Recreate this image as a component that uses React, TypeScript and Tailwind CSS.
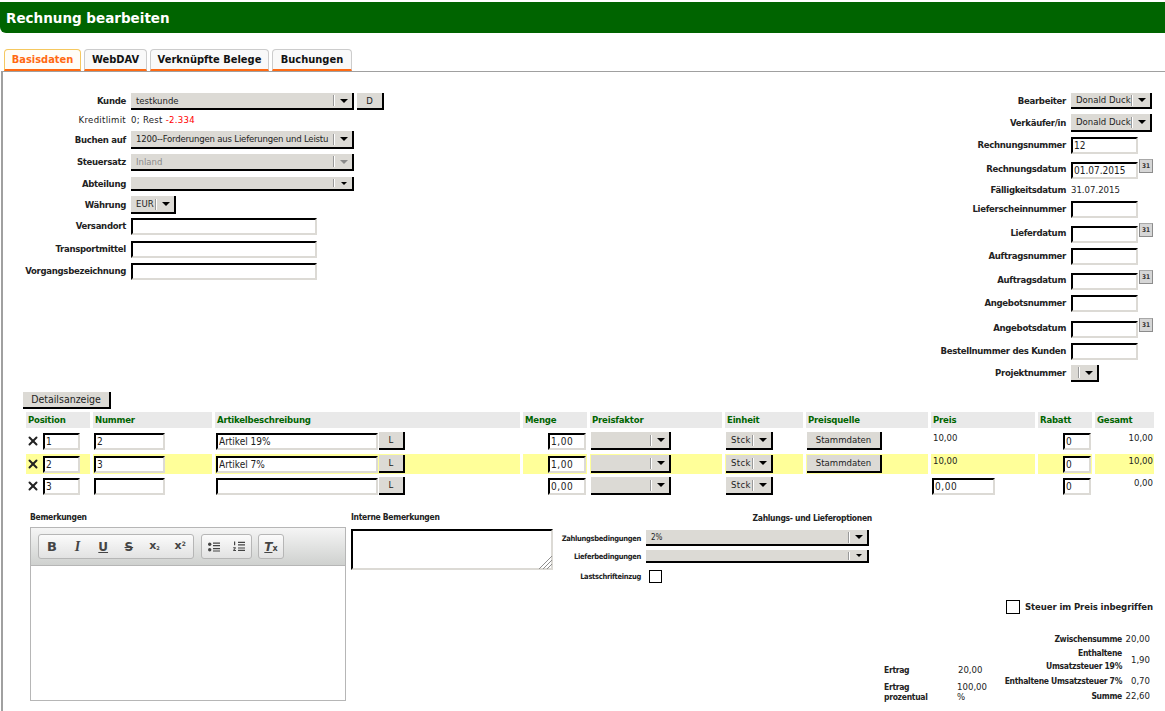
import React from 'react'
import { X } from 'lucide-react'

const condensed = "font-['DejaVu_Sans_Condensed','DejaVu_Sans',sans-serif]"
const labelText = 'text-[9.5px] font-bold tracking-[-0.3px] text-[#222]'
const smallLabel = 'text-[8.5px] font-bold tracking-[-0.3px] text-[#222]'
const tinyLabel = 'text-[7.5px] font-bold tracking-[-0.3px] text-[#222]'

const inputBox =
  'box-border border-2 border-t-black border-l-black border-r-[#dcdad5] border-b-[#dcdad5] bg-white px-px text-[10px] text-[#222] outline-none'

const Arrow = ({ muted, tiny }: { muted?: boolean; tiny?: boolean }) => (
  <svg width={tiny ? 6 : 8} height={tiny ? 3 : 4} viewBox="0 0 8 4" className="block">
    <path d="M0 0h8L4 4z" fill={muted ? '#8a8a8a' : '#000'} />
  </svg>
)

const Select = ({
  className,
  text,
  muted,
  small,
  tiny,
}: {
  className: string
  text?: string
  muted?: boolean
  small?: boolean
  tiny?: boolean
}) => (
  <div
    className={`box-border flex items-center overflow-hidden border-r-2 border-b-2 border-black bg-[#dcdad5] pl-[5px] ${
      small ? 'text-[8px]' : 'text-[9.5px]'
    } ${muted ? 'text-[#8a8a8a]' : 'text-[#222]'} ${className}`}
  >
    <span className="min-w-0 flex-1 whitespace-nowrap pt-px">{text}</span>
    <span className={`${tiny ? 'h-[8px]' : 'h-[11px]'} w-[2px] shrink-0 border-l border-[#999] bg-white`} />
    <span className="flex w-[17px] shrink-0 justify-center">
      <Arrow muted={muted} tiny={tiny} />
    </span>
  </div>
)

const Btn = ({ className, children }: { className: string; children: React.ReactNode }) => (
  <div
    className={`box-border flex items-center justify-center border-r-2 border-b-2 border-black bg-[#dcdad5] pt-px text-[9.5px] text-[#222] ${className}`}
  >
    {children}
  </div>
)

const Field = ({ className, value }: { className: string; value?: string }) => (
  <input readOnly value={value ?? ''} className={`${inputBox} ${className}`} />
)

const CalIcon = () => (
  <div className="ml-px box-border flex h-[14px] w-[14px] shrink-0 items-center justify-center border border-[#8c8c8c] border-t-[#a8a8a8] bg-[#d6d6d6] text-[6.5px] font-bold leading-none text-[#333]">
    31
  </div>
)

const LeftRow = ({
  label,
  className,
  plain,
  children,
}: {
  label: string
  className: string
  plain?: boolean
  children: React.ReactNode
}) => (
  <div className={`flex items-center ${className}`}>
    <span
      className={`w-[125px] shrink-0 whitespace-nowrap pr-[5px] text-right ${
        plain ? 'text-[9.5px] tracking-[0.3px] text-[#222]' : labelText
      }`}
    >
      {label}
    </span>
    {children}
  </div>
)

const RightRow = ({
  label,
  className,
  children,
}: {
  label: string
  className: string
  children: React.ReactNode
}) => (
  <div className={`flex items-center ${className}`}>
    <span className={`w-[170px] shrink-0 whitespace-nowrap pr-[5px] text-right ${labelText}`}>{label}</span>
    {children}
  </div>
)

const DateField = ({ value }: { value?: string }) => (
  <div className="flex items-start">
    <Field className="mt-[3px] h-[17px] w-[67px]" value={value} />
    <CalIcon />
  </div>
)

const columns = [
  'Position',
  'Nummer',
  'Artikelbeschreibung',
  'Menge',
  'Preisfaktor',
  'Einheit',
  'Preisquelle',
  'Preis',
  'Rabatt',
  'Gesamt',
]

const gridCols = 'grid grid-cols-[64px_119px_305px_64px_132px_78px_122px_104px_54px_59px] gap-x-[3px]'

const rows = [
  { pos: '1', num: '2', text: 'Artikel 19%', menge: '1,00', stamm: true, preis: '10,00', gesamt: '10,00', hi: false },
  { pos: '2', num: '3', text: 'Artikel 7%', menge: '1,00', stamm: true, preis: '10,00', gesamt: '10,00', hi: true },
  { pos: '3', num: '', text: '', menge: '0,00', stamm: false, preis: '0,00', gesamt: '0,00', hi: false },
]

const Cell = ({ hi, className, children }: { hi: boolean; className?: string; children?: React.ReactNode }) => (
  <div className={`flex items-center ${hi ? 'bg-[#ffff99]' : ''} ${className ?? ''}`}>{children}</div>
)

const Tab = ({ label, className, active }: { label: string; className: string; active?: boolean }) => (
  <div
    className={`box-border flex h-[22px] items-center justify-center rounded-t-[4px] border border-b-2 pt-[2px] text-[11px] font-bold ${className} ${
      active ? 'border-[#f5c860] border-b-[#ff6a13] bg-[#fffdf8] text-[#ff6a13]' : 'border-[#ccc] border-b-[#ff6a13] bg-[#f9f9f9] text-[#111]'
    }`}
  >
    {label}
  </div>
)

const ToolBtn = ({ children, className }: { children: React.ReactNode; className?: string }) => (
  <span className={`flex h-full flex-1 items-center justify-center font-['DejaVu_Sans',sans-serif] text-[#444] ${className ?? ''}`}>
    {children}
  </span>
)

const toolGroup =
  'flex h-[25px] items-center rounded-[3px] border border-[#b6b6b6] bg-gradient-to-b from-[#fbfbfb] to-[#e2e2e2]'

export default function App() {
  return (
    <div className={`h-[711px] w-[1165px] overflow-hidden bg-white pt-[2px] ${condensed}`}>
      <div className="flex h-[31px] items-center rounded-bl-[6px] bg-[#006400] pt-px pl-[6px] font-['DejaVu_Sans',sans-serif] text-[13.5px] font-bold text-white">
        Rechnung bearbeiten
      </div>

      <div className="mt-[16px] flex h-[22px] gap-[3px] pl-[4px]">
        <Tab label="Basisdaten" className="w-[77px]" active />
        <Tab label="WebDAV" className="w-[63px]" />
        <Tab label="Verknüpfte Belege" className="w-[119px]" />
        <Tab label="Buchungen" className="w-[80px]" />
      </div>

      <div className="ml-px h-[640px] border-t border-l-2 border-[#a0a0a0] pl-[3px]">
        <div className="flex justify-between pt-[21px] pr-[12px]">
          <div className="flex w-[400px] flex-col">
            <LeftRow label="Kunde" className="h-[17px]">
              <Select className="h-[17px] w-[223px]" text="testkunde" />
              <Btn className="ml-[3px] h-[17px] w-[27px]">D</Btn>
            </LeftRow>
            <LeftRow label="Kreditlimit" plain className="mt-[2px] h-[17px]">
              <span className="text-[9.5px] tracking-[0.3px] text-[#222]">
                0; Rest <span className="text-[#f00]">-2.334</span>
              </span>
            </LeftRow>
            <LeftRow label="Buchen auf" className="mt-[2px] h-[18px]">
              <Select className="h-[18px] w-[223px] tracking-[-0.2px]" text="1200--Forderungen aus Lieferungen und Leistu" />
            </LeftRow>
            <LeftRow label="Steuersatz" className="mt-[5px] h-[17px]">
              <Select className="h-[17px] w-[223px]" text="Inland" muted />
            </LeftRow>
            <LeftRow label="Abteilung" className="mt-[6px] h-[14px]">
              <Select className="h-[14px] w-[223px]" tiny />
            </LeftRow>
            <LeftRow label="Währung" className="mt-[5px] h-[18px]">
              <Select className="h-[18px] w-[45px]" text="EUR" />
            </LeftRow>
            <LeftRow label="Versandort" className="mt-[4px] h-[17px]">
              <Field className="h-[17px] w-[186px]" />
            </LeftRow>
            <LeftRow label="Transportmittel" className="mt-[6px] h-[17px]">
              <Field className="h-[17px] w-[186px]" />
            </LeftRow>
            <LeftRow label="Vorgangsbezeichnung" className="mt-[5px] h-[17px]">
              <Field className="h-[17px] w-[186px]" />
            </LeftRow>
          </div>

          <div className="flex flex-col">
            <RightRow label="Bearbeiter" className="h-[16px]">
              <Select className="h-[16px] w-[81px]" text="Donald Duck" />
            </RightRow>
            <RightRow label="Verkäufer/in" className="mt-[5px] h-[18px]">
              <Select className="h-[18px] w-[81px]" text="Donald Duck" />
            </RightRow>
            <RightRow label="Rechnungsnummer" className="mt-[5px] h-[17px]">
              <Field className="h-[17px] w-[67px]" value="12" />
            </RightRow>
            <RightRow label="Rechnungsdatum" className="mt-[5px] h-[20px]">
              <DateField value="01.07.2015" />
            </RightRow>
            <RightRow label="Fälligkeitsdatum" className="mt-[4px] h-[14px]">
              <span className="text-[9.5px] text-[#222]">31.07.2015</span>
            </RightRow>
            <RightRow label="Lieferscheinnummer" className="mt-[4px] h-[17px]">
              <Field className="h-[17px] w-[67px]" />
            </RightRow>
            <RightRow label="Lieferdatum" className="mt-[5px] h-[20px]">
              <DateField />
            </RightRow>
            <RightRow label="Auftragsnummer" className="mt-[5px] h-[17px]">
              <Field className="h-[17px] w-[67px]" />
            </RightRow>
            <RightRow label="Auftragsdatum" className="mt-[5px] h-[20px]">
              <DateField />
            </RightRow>
            <RightRow label="Angebotsnummer" className="mt-[5px] h-[17px]">
              <Field className="h-[17px] w-[67px]" />
            </RightRow>
            <RightRow label="Angebotsdatum" className="mt-[6px] h-[20px]">
              <DateField />
            </RightRow>
            <RightRow label="Bestellnummer des Kunden" className="mt-[5px] h-[17px]">
              <Field className="h-[17px] w-[67px]" />
            </RightRow>
            <RightRow label="Projektnummer" className="mt-[5px] h-[17px]">
              <Select className="h-[17px] w-[28px]" />
            </RightRow>
          </div>
        </div>

        <Btn className="mt-[10px] ml-[17px] h-[17px] w-[88px] text-[10.5px]">Detailsanzeige</Btn>

        <div className="mt-[3px] ml-[20px] w-[1129px]">
          <div className={gridCols}>
            {columns.map((c) => (
              <div
                key={c}
                className="flex h-[16px] items-center bg-[#e9e9e9] pl-[2px] text-[9.5px] font-bold tracking-[-0.2px] text-[#006400]"
              >
                {c}
              </div>
            ))}
          </div>
          {rows.map((r, i) => (
            <div key={r.pos} className={`${gridCols} h-[20px] ${i === 2 ? 'mt-[2px]' : 'mt-[3px]'}`}>
              <Cell hi={r.hi}>
                <X size={14} strokeWidth={3.4} className="text-[#222]" />
                <Field className="ml-[3px] h-[17px] w-[37px]" value={r.pos} />
              </Cell>
              <Cell hi={r.hi} className="pl-px">
                <Field className="h-[17px] w-[71px]" value={r.num} />
              </Cell>
              <Cell hi={r.hi} className="pl-px">
                <Field className="h-[17px] w-[162px]" value={r.text} />
                <Btn className="ml-px h-[18px] w-[26px]">L</Btn>
              </Cell>
              <Cell hi={r.hi} className="justify-end">
                <Field className="mr-px h-[17px] w-[38px] tracking-[0.6px]" value={r.menge} />
              </Cell>
              <Cell hi={r.hi} className="pl-px">
                <Select className="h-[18px] w-[80px]" />
              </Cell>
              <Cell hi={r.hi} className="pl-px">
                <Select className="h-[18px] w-[47px] tracking-[0.3px]" text="Stck" />
              </Cell>
              <Cell hi={r.hi} className="pl-px">
                {r.stamm ? <Btn className="h-[18px] w-[75px]">Stammdaten</Btn> : null}
              </Cell>
              <Cell hi={r.hi} className={r.stamm ? 'items-start pl-[2px] text-[9.5px] leading-[13px] text-[#222]' : 'pl-px'}>
                {r.stamm ? r.preis : <Field className="h-[17px] w-[63px] tracking-[0.6px]" value={r.preis} />}
              </Cell>
              <Cell hi={r.hi} className="justify-end">
                <Field className="mr-px h-[17px] w-[28px]" value="0" />
              </Cell>
              <Cell hi={r.hi} className="items-start justify-end pr-px text-[9.5px] leading-[13px] text-[#222]">
                {r.gesamt}
              </Cell>
            </div>
          ))}
        </div>

        <div className="mt-[14px] flex">
          <div className="ml-[24px] w-[316px] shrink-0">
            <div className={`h-[12px] pt-px leading-[12px] ${smallLabel}`}>Bemerkungen</div>
            <div className="mt-[5px] box-border h-[174px] border border-[#b6b6b6] bg-white">
              <div className="flex h-[38px] items-center border-b border-[#b6b6b6] bg-gradient-to-b from-[#f5f5f5] to-[#cfd1cf] pl-[7px]">
                <div className={`w-[156px] ${toolGroup}`}>
                  <ToolBtn className="text-[13px] font-bold">B</ToolBtn>
                  <ToolBtn className="font-['Liberation_Serif',serif] text-[14px] font-bold italic">I</ToolBtn>
                  <ToolBtn className="text-[12px] font-bold underline">U</ToolBtn>
                  <ToolBtn className="text-[12px] font-bold line-through">S</ToolBtn>
                  <ToolBtn className="text-[11px] font-bold">
                    x<sub className="text-[5px]">2</sub>
                  </ToolBtn>
                  <ToolBtn className="text-[11px] font-bold">
                    x<sup className="text-[6px]">2</sup>
                  </ToolBtn>
                </div>
                <div className={`ml-[7px] w-[51px] ${toolGroup}`}>
                  <ToolBtn>
                    <svg width="12" height="10" viewBox="0 0 12 10" fill="#444">
                      <circle cx="1.7" cy="2.2" r="1.7" />
                      <circle cx="1.7" cy="7.8" r="1.7" />
                      <path d="M5 0.6h7v1.2H5zM5 3h7v1.2H5zM5 6h7v1.2H5zM5 8.4h7v1.2H5z" />
                    </svg>
                  </ToolBtn>
                  <ToolBtn>
                    <svg width="12" height="11" viewBox="0 0 12 11" fill="#444">
                      <path d="M1 0.6h1.2v3.6H1zM0.2 6.2h2.6v1.1L1.4 9h1.6v1H0.2V9l1.5-1.8H0.2z" />
                      <path d="M5 0.8h7V2H5zM5 3.2h7v1.2H5zM5 6.4h7v1.2H5zM5 8.8h7V10H5z" />
                    </svg>
                  </ToolBtn>
                </div>
                <div className={`ml-[6px] w-[26px] ${toolGroup}`}>
                  <ToolBtn className="items-center text-[12px] font-bold italic">
                    <span className="underline">T</span>
                    <sub className="text-[8px] not-italic">x</sub>
                  </ToolBtn>
                </div>
              </div>
            </div>
          </div>

          <div className="ml-[5px] w-[204px] shrink-0">
            <div className={`h-[12px] pt-px leading-[12px] ${smallLabel}`}>Interne Bemerkungen</div>
            <div className="relative mt-[7px] h-[41px] w-[202px]">
              <textarea readOnly className={`${inputBox} block h-full w-full resize-none`} />
              <svg width="14" height="14" viewBox="0 0 14 14" className="absolute right-[1px] bottom-[1px]" stroke="#8f8f8f" fill="none">
                <path d="M14 1L1 14M14 5L5 14M14 9L9 14" />
              </svg>
            </div>
          </div>

          <div className="flex-1">
            <div className={`h-[12px] w-[317px] pt-[2px] text-right leading-[12px] ${smallLabel}`}>Zahlungs- und Lieferoptionen</div>
            <div className="mt-[8px] flex items-center">
              <span className={`w-[91px] pt-px pr-[5px] text-right whitespace-nowrap ${tinyLabel}`}>Zahlungsbedingungen</span>
              <Select small className="h-[16px] w-[223px]" text="2%" />
            </div>
            <div className="mt-[4px] flex items-center">
              <span className={`w-[91px] pt-px pr-[5px] text-right whitespace-nowrap ${tinyLabel}`}>Lieferbedingungen</span>
              <Select small tiny className="h-[13px] w-[223px]" />
            </div>
            <div className="mt-[7px] flex items-center">
              <span className={`w-[91px] pt-px pr-[5px] text-right whitespace-nowrap ${tinyLabel}`}>Lastschrifteinzug</span>
              <span className="ml-[3px] box-border h-[13px] w-[13px] border border-black bg-white" />
            </div>

            <div className="mt-[17px] flex items-center justify-end pr-[12px]">
              <span className="box-border h-[14px] w-[14px] border border-black bg-white" />
              <span className="ml-[5px] text-[9.5px] font-bold tracking-[-0.1px] text-[#222]">Steuer im Preis inbegriffen</span>
            </div>

            <div className="mt-[19px] flex items-end justify-between pr-[15px] pl-[329px] text-[9.5px] text-[#222]">
              <div className="w-[103px]">
                <div className="flex leading-[12px]">
                  <span className={`w-[74px] ${smallLabel}`}>Ertrag</span>
                  <span>20,00</span>
                </div>
                <div className="mt-[6px] flex leading-[10px]">
                  <span className={`w-[74px] ${smallLabel}`}>
                    Ertrag
                    <br />
                    prozentual
                  </span>
                  <span>
                    100,00
                    <br />%
                  </span>
                </div>
              </div>
              <div className="w-[148px] leading-[12px]">
                <div className="flex justify-end">
                  <span className={smallLabel}>Zwischensumme</span>
                  <span className="w-[28px] text-right">20,00</span>
                </div>
                <div className="mt-[2px] flex items-center justify-end leading-[12.5px]">
                  <span className={`text-right ${smallLabel}`}>
                    Enthaltene
                    <br />
                    Umsatzsteuer 19%
                  </span>
                  <span className="w-[28px] text-right">1,90</span>
                </div>
                <div className="mt-[3px] flex justify-end whitespace-nowrap">
                  <span className={smallLabel}>Enthaltene Umsatzsteuer 7%</span>
                  <span className="w-[28px] text-right">0,70</span>
                </div>
                <div className="mt-[3px] flex justify-end">
                  <span className={smallLabel}>Summe</span>
                  <span className="w-[28px] text-right">22,60</span>
                </div>
              </div>
            </div>
          </div>
        </div>
      </div>
    </div>
  )
}
